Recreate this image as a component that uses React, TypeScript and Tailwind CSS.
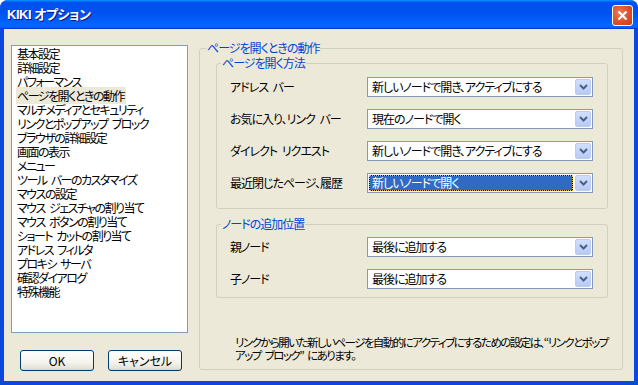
const menuItems = [
  '基本設定',
  '詳細設定',
  'パフォーマンス',
  'ページを開くときの動作',
  'マルチメディアとセキュリティ',
  'リンクとポップアップ ブロック',
  'ブラウザの詳細設定',
  '画面の表示',
  'メニュー',
  'ツール バーのカスタマイズ',
  'マウスの設定',
  'マウス ジェスチャの割り当て',
  'マウス ボタンの割り当て',
  'ショート カットの割り当て',
  'アドレス フィルタ',
  'プロキシ サーバ',
  '確認ダイアログ',
  '特殊機能',
]

const openRows = [
  { label: 'アドレス バー', value: '新しいノードで開き、アクティブにする' },
  { label: 'お気に入り、リンク バー', value: '現在のノードで開く' },
  { label: 'ダイレクト リクエスト', value: '新しいノードで開き、アクティブにする' },
  { label: '最近閉じたページ、履歴', value: '新しいノードで開く', focused: true },
]

const nodeRows = [
  { label: '親ノード', value: '最後に追加する' },
  { label: '子ノード', value: '最後に追加する' },
]

const ArrowButton = () => (
  <div className="flex h-full w-[16px] items-center justify-center rounded-[2px] border border-[#BACCF5] bg-[linear-gradient(180deg,#D2DEFD,#B7CAF7)]">
    <svg width="9" height="6" viewBox="0 0 9 6">
      <polyline
        points="1,1 4.5,4.5 8,1"
        fill="none"
        stroke="#4D6185"
        strokeWidth="2"
      />
    </svg>
  </div>
)

const Combo = ({ value, focused }: { value: string; focused?: boolean }) => (
  <div className="flex h-[20px] w-[226px] gap-[2px] border border-[#7F9DB9] bg-white p-px">
    {focused ? (
      <div className="flex-1 border border-dotted border-[#F2B45A] bg-black">
        <div className="h-full bg-[#316AC5] pl-[2px] leading-[14px] whitespace-nowrap text-white">
          {value}
        </div>
      </div>
    ) : (
      <div className="flex-1 pl-[3px] leading-[16px] whitespace-nowrap">{value}</div>
    )}
    <ArrowButton />
  </div>
)

const ComboRow = ({
  label,
  value,
  focused,
}: {
  label: string
  value: string
  focused?: boolean
}) => (
  <div className="flex items-center">
    <span className="flex-1 leading-[14px]">{label}</span>
    <Combo value={value} focused={focused} />
  </div>
)

const XpButton = ({ children }: { children: string }) => (
  <button className="h-[21px] w-[74px] rounded-[3px] border border-[#003C74] bg-[linear-gradient(180deg,#FFFFFF,#F4F3EE_60%,#E6E3D8_90%,#D6D0C5)] text-[12px] leading-[19px] text-black">
    {children}
  </button>
)

const App = () => {
  return (
    <div className="h-[385px] w-[638px] bg-white font-['Noto_Sans_CJK_JP',sans-serif] text-[12px] tracking-[-1px] text-black [font-feature-settings:'palt'] [word-spacing:3px]">
      <div className="flex h-full flex-col rounded-t-[8px] bg-[#0A48DC]">
        {/* title bar */}
        <div className="flex h-[29px] justify-between rounded-t-[8px] bg-[linear-gradient(180deg,#0997FF,#0053EE_8%,#0050EE_40%,#0066FF_88%,#0066FF_93%,#005BFF_95%,#003DD7_96%,#003DD7)] pl-[7px] pr-[5px]">
          <span className="pt-[7px] font-['Liberation_Sans','Noto_Sans_CJK_JP',sans-serif] text-[13px] font-bold leading-[15px] tracking-[-0.5px] text-white [text-shadow:1px_1px_#0F1089] [word-spacing:0px]">
            KIKI オプション
          </span>
          <div className="mt-[5px] flex h-[21px] w-[21px] items-center justify-center rounded-[3px] border border-white bg-[radial-gradient(circle_at_35%_35%,#EC7A56_0%,#DD4F2A_55%,#C83C18_100%)]">
            <svg width="11" height="11" viewBox="0 0 11 11">
              <path
                d="M1.5 1.5 L9.5 9.5 M9.5 1.5 L1.5 9.5"
                stroke="white"
                strokeWidth="2.2"
              />
            </svg>
          </div>
        </div>

        {/* client area */}
        <div className="mx-[4px] mb-[4px] flex flex-1 bg-[#ECE9D8]">
          <div className="flex flex-col">
            <div className="ml-[7px] mt-[16px] h-[288px] w-[177px] border border-[#7F9DB9] bg-white pl-[4px] pt-px tracking-[-1.5px]">
              {menuItems.map((item, i) => (
                <div key={item} className="h-[14px] leading-[14px] whitespace-nowrap">
                  <span className={i === 3 ? 'bg-[#ECE9D8] pl-px pr-[2px]' : 'pl-px'}>
                    {item}
                  </span>
                </div>
              ))}
            </div>
            <div className="ml-[16px] mt-[17px] flex gap-[14px] tracking-normal">
              <XpButton>OK</XpButton>
              <XpButton>キャンセル</XpButton>
            </div>
          </div>

          <fieldset className="ml-[11px] mt-[12px] h-[329px] w-[424px] min-w-0 rounded-[3px] border border-[#D0D0BF]">
            <legend className="ml-[6px] px-px leading-[14px] text-[#0046D5]">
              ページを開くときの動作
            </legend>
            <div className="flex h-[314px] flex-col pl-[16px] pr-[14px]">
              <fieldset className="mt-px min-w-0 rounded-[3px] border border-[#D0D0BF]">
                <legend className="ml-[4px] px-px leading-[14px] text-[#0046D5]">
                  ページを開く方法
                </legend>
                <div className="flex flex-col gap-[12px] pb-[15px] pl-[13px] pr-[14px] pt-[7px]">
                  {openRows.map((row) => (
                    <ComboRow key={row.label} {...row} />
                  ))}
                </div>
              </fieldset>

              <fieldset className="mt-[8px] min-w-0 rounded-[3px] border border-[#D0D0BF]">
                <legend className="ml-[4px] px-px leading-[14px] text-[#0046D5]">
                  ノードの追加位置
                </legend>
                <div className="flex flex-col gap-[12px] pb-[8px] pl-[13px] pr-[14px] pt-[6px]">
                  {nodeRows.map((row) => (
                    <ComboRow key={row.label} {...row} />
                  ))}
                </div>
              </fieldset>

              <p className="mt-auto whitespace-nowrap pb-[7px] pl-[19px] text-[11.5px] leading-[13px] tracking-[-1.55px]">
                リンクから開いた新しいページを自動的にアクティブにするための設定は、“リンクとポップ
                <br />
                アップ ブロック” にあります。
              </p>
            </div>
          </fieldset>
        </div>
      </div>
    </div>
  )
}

export default App
